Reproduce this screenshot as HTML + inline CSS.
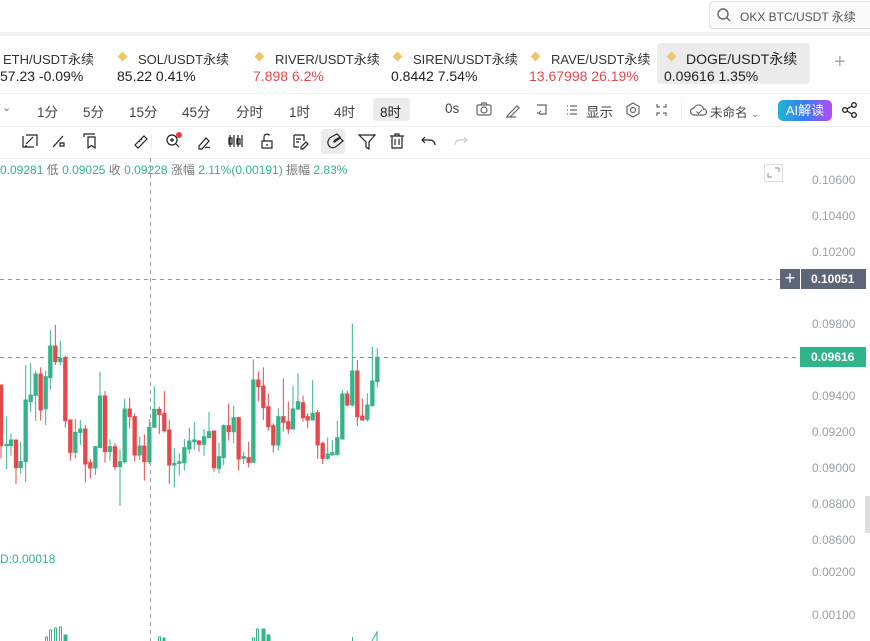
<!DOCTYPE html>
<html><head><meta charset="utf-8"><style>
*{margin:0;padding:0;box-sizing:border-box}
body{width:870px;height:641px;overflow:hidden;background:#fff;font-family:"Liberation Sans","Noto Sans CJK SC",sans-serif;position:relative;color:#333}
.a{position:absolute;white-space:nowrap}
.hl{position:absolute;left:0;width:870px;height:1px;background:#eef0f2}
.tk{font-size:13px;color:#333}
.pr{font-size:14px;color:#222}
.red{color:#e5484d}
.dia{position:absolute;width:7px;height:7px;background:#f3c56a;transform:rotate(45deg)}
.tf{font-size:13.5px;color:#444;top:101px}
.ax{position:absolute;white-space:nowrap;font-size:12px;color:#9aa0a8;left:812px}
svg{position:absolute}
</style></head><body>
<div class="a" style="left:0;top:0;width:870px;height:33px;background:#fff"></div>
<div class="a" style="left:0;top:32px;width:870px;height:4px;background:#f3f4f6"></div>
<div class="a" style="left:709px;top:1px;width:165px;height:28px;border:1px solid #dfe1e5;border-radius:4px;background:#fafafa"></div>
<svg style="left:716px;top:7px" width="16" height="16" viewBox="0 0 16 16"><circle cx="7" cy="7" r="5" fill="none" stroke="#666" stroke-width="1.4"/><path d="M10.5 10.5L14 14" stroke="#666" stroke-width="1.4"/></svg>
<div class="a" style="left:740px;top:8px;font-size:12px;color:#555">OKX BTC/USDT 永续</div>

<div class="a" style="left:657px;top:43px;width:153px;height:41px;background:#ebebeb;border-radius:4px"></div>
<div class="a tk" style="left:3px;top:49px">ETH/USDT永续</div><div class="a pr" style="left:0;top:68px">57.23 -0.09%</div>
<div class="dia" style="left:119px;top:53px"></div><div class="a tk" style="left:138px;top:49px">SOL/USDT永续</div><div class="a pr" style="left:117px;top:68px">85.22 0.41%</div>
<div class="dia" style="left:256px;top:53px"></div><div class="a tk" style="left:275px;top:49px">RIVER/USDT永续</div><div class="a pr red" style="left:253px;top:68px">7.898 6.2%</div>
<div class="dia" style="left:394px;top:53px"></div><div class="a tk" style="left:413px;top:49px">SIREN/USDT永续</div><div class="a pr" style="left:391px;top:68px">0.8442 7.54%</div>
<div class="dia" style="left:532px;top:53px"></div><div class="a tk" style="left:551px;top:49px">RAVE/USDT永续</div><div class="a pr red" style="left:529px;top:68px">13.67998 26.19%</div>
<div class="dia" style="left:668px;top:53px"></div><div class="a tk" style="left:686px;top:49px;font-size:14px;color:#222">DOGE/USDT永续</div><div class="a pr" style="left:664px;top:68px">0.09616 1.35%</div>
<div class="a" style="left:834px;top:51px;font-size:20px;color:#aaa;font-weight:300">+</div>

<div class="hl" style="top:93px"></div>
<div class="a" style="left:2px;top:101px;font-size:11px;color:#777">⌄</div>
<div class="a" style="left:373px;top:98px;width:37px;height:23px;background:#ebebeb;border-radius:3px"></div>
<div class="a tf" style="left:37px">1分</div><div class="a tf" style="left:83px">5分</div><div class="a tf" style="left:129px">15分</div><div class="a tf" style="left:182px">45分</div><div class="a tf" style="left:236px">分时</div><div class="a tf" style="left:289px">1时</div><div class="a tf" style="left:334px">4时</div><div class="a tf" style="left:380px;color:#222">8时</div>
<div class="a tf" style="left:445px">0s</div>
<svg style="left:475px;top:101px" width="150" height="18" viewBox="0 0 150 18" fill="none" stroke="#666" stroke-width="1.2"><rect x="2" y="4" width="14" height="10" rx="1.5"/><circle cx="9" cy="9" r="3"/><path d="M6 4l1-2h4l1 2"/><path d="M33 14l9-9 2 2-9 9h-3z M31 16h10"/><path d="M62 4h9v9h-5 M66 10l-2 2 2 2 M64 12h-2"/><path d="M95 5h7 M95 9h7 M95 13h7 M92 5h1 M92 9h1 M92 13h1"/></svg>
<div class="a tf" style="left:586px;top:101px">显示</div>
<svg style="left:624px;top:101px" width="50" height="18" viewBox="0 0 50 18" fill="none" stroke="#666" stroke-width="1.2"><path d="M9 2l6 3.5v7L9 16l-6-3.5v-7z"/><circle cx="9" cy="9" r="2.5"/><path d="M33 3v3h3 M42 3v3h-3 M33 15v-3h3 M42 15v-3h-3"/></svg>
<div class="a" style="left:681px;top:98px;width:1px;height:24px;background:#eee"></div>
<svg style="left:690px;top:102px" width="18" height="16" viewBox="0 0 18 16" fill="none" stroke="#666" stroke-width="1.2"><path d="M4 13a3.5 3.5 0 0 1 0-7 5 5 0 0 1 9.5 1 3 3 0 0 1 0 6z"/><path d="M6.5 9.5l2 2 3.5-3.5"/></svg>
<div class="a tf" style="left:710px;font-size:12.5px;top:102px">未命名 <span style="font-size:10px;color:#777">⌄</span></div>
<div class="a" style="left:778px;top:100px;width:54px;height:21px;border-radius:5px;background:linear-gradient(90deg,#1fb6d6,#3a7cf0 50%,#b64cf3);color:#fff;font-size:13px;text-align:center;line-height:21px">AI解读</div>
<svg style="left:841px;top:101px" width="18" height="18" viewBox="0 0 18 18" fill="none" stroke="#222" stroke-width="1.3"><circle cx="4" cy="9" r="2.3"/><circle cx="13" cy="4" r="2.3"/><circle cx="13" cy="14" r="2.3"/><path d="M6 8l5-3 M6 10l5 3"/></svg>

<div class="hl" style="top:126px"></div>
<div class="a" style="left:321px;top:129px;width:24px;height:25px;background:#ebebeb;border-radius:3px"></div>
<svg style="left:0;top:131px" width="480" height="20" viewBox="0 0 480 20" fill="none" stroke="#222" stroke-width="1.2">
<path d="M23 5v11h11 M37 15V4H26 M26 13l7-7 M25 15h2"/>
<path d="M53 16l10-11 M56 13l-2 2 M60 15h4v-3h-4z" />
<path d="M104 6v-3h11 M108 6h7v11l-3.5-2.5-3.5 2.5z" transform="translate(-20 0)"/>
<path d="M135 14l9-9 3 3-9 9z M139 10l1 1 M141 8l1 1"/>
<circle cx="172" cy="9" r="5"/><path d="M176 13l3 3 M170 9h4 M172 7v4"/>
<path d="M199 15l7-8 3 3-7 8h-3z M205 17c2-1 3-1 5 0"/>
<path d="M230 4v12 M234 4v12 M238 4v12 M242 4v12 M229 7h3v6h-3z M237 8h3v5h-3z"/>
<path d="M262 10h10v7h-10z M264 10V6a3 3 0 0 1 5.5-1.5 M267 13v2"/>
<path d="M294 4h10v6 M294 4v12h5 M296 8h5 M296 11h3 M301 16l5-5 2 2-5 5h-2z"/>
<path d="M330 16c-4-4-2-9 3-11l4-2 3 3-5 3c-2 2-1 3 1 1l4-3 3 3-5 4c-3 3-6 3-8 2z"/>
<path d="M359 4h16l-6 7v7l-3-2v-5z"/>
<path d="M390 5h14 M395 5V3h4v2 M392 5v12h10V5 M395 8v6 M399 8v6"/>
<path d="M425 6l-3 3 3 3 M422 9h8a5 5 0 0 1 5 5"/>
<path d="M464 6l3 3-3 3 M467 9h-7a5 5 0 0 0-5 5" stroke="#ccc"/>
</svg>
<div class="a" style="left:176px;top:132px;width:6px;height:6px;border-radius:50%;background:#f03a3a"></div>
<div class="a" style="left:151px;top:134px;width:1px;height:16px;background:#eee"></div>

<div class="hl" style="top:158px"></div>
<div class="a" style="left:0;top:161px;font-size:12px;color:#2fb58a"><span>0.09281</span> <span style="color:#777">低</span> 0.09025 <span style="color:#777">收</span> 0.09228 <span style="color:#777">涨幅</span> 2.11%(0.00191) <span style="color:#777">振幅</span> 2.83%</div>
<svg style="left:764px;top:164px" width="19" height="18" viewBox="0 0 19 18" fill="none"><rect x="0.5" y="0.5" width="18" height="17" stroke="#ddd"/><path d="M4 9v4h4 M11 4h4v4" stroke="#888"/></svg>

<svg style="left:0;top:158px" width="870" height="483">
<line x1="150.5" y1="0" x2="150.5" y2="483" stroke="#999" stroke-dasharray="4 4"/>
<line x1="0" y1="121.5" x2="780" y2="121.5" stroke="#999" stroke-dasharray="4 4"/>
<line x1="0" y1="199.5" x2="800" y2="199.5" stroke="#2fb58a" stroke-dasharray="4 4"/>
</svg>
<div class="ax" style="top:173px">0.10600</div><div class="ax" style="top:209px">0.10400</div><div class="ax" style="top:245px">0.10200</div>
<div class="ax" style="top:317px">0.09800</div><div class="ax" style="top:389px">0.09400</div><div class="ax" style="top:425px">0.09200</div><div class="ax" style="top:461px">0.09000</div><div class="ax" style="top:497px">0.08800</div><div class="ax" style="top:533px">0.08600</div><div class="ax" style="top:565px">0.00200</div><div class="ax" style="top:608px">0.00100</div>
<div class="a" style="left:780px;top:269px;width:20px;height:20px;background:#5d6677;color:#fff;font-size:18px;line-height:19px;text-align:center">+</div>
<div class="a" style="left:801px;top:269px;width:65px;height:20px;background:#5d6677;color:#fff;font-size:12px;font-weight:bold;line-height:20px;padding-left:10px">0.10051</div>
<div class="a" style="left:800px;top:347px;width:66px;height:20px;background:#2fb58a;color:#fff;font-size:12px;font-weight:bold;line-height:20px;padding-left:11px">0.09616</div>
<div class="a" style="left:865px;top:496px;width:5px;height:37px;background:#ddd"></div>
<div class="a" style="left:0;top:552px;font-size:12px;color:#2fb58a">D:0.00018</div>

<svg style="left:0;top:310px" width="400" height="200" viewBox="0 0 1200 600">
<g stroke="#e5484d" stroke-width="3" fill="#e5484d">
<path d="M3 225V445M48 390V522M122 172V332M166 45V165M196 137V353M211 330V452M256 345V517M271 447V505M315 243V457M345 400V480M389 263V355M404 310V455M433 373V512M478 290V372M493 243V368M508 330V522M597 390V425M642 363V485M686 280V392M716 320V482M746 395V472M775 185V275M790 172V330M805 250V362M820 340V427M850 205V365M865 275V372M909 257V335M923 310V355M953 300V447M968 395V462M1042 242V290M1072 150V348M1087 265V332"/>
<rect x="-2" y="225" width="10" height="182"/><rect x="43" y="390" width="10" height="83"/><rect x="117" y="192" width="10" height="108"/><rect x="161" y="108" width="10" height="47"/><rect x="191" y="143" width="10" height="189"/><rect x="206" y="330" width="10" height="97"/><rect x="251" y="357" width="10" height="105"/><rect x="266" y="458" width="10" height="16"/><rect x="310" y="258" width="10" height="167"/><rect x="340" y="410" width="10" height="60"/><rect x="384" y="297" width="10" height="23"/><rect x="399" y="320" width="10" height="115"/><rect x="428" y="408" width="10" height="47"/><rect x="473" y="298" width="10" height="15"/><rect x="488" y="310" width="10" height="52"/><rect x="503" y="360" width="10" height="105"/><rect x="592" y="393" width="10" height="10"/><rect x="637" y="363" width="10" height="110"/><rect x="681" y="347" width="10" height="18"/><rect x="711" y="323" width="10" height="124"/><rect x="741" y="443" width="10" height="14"/><rect x="770" y="210" width="10" height="20"/><rect x="785" y="228" width="10" height="65"/><rect x="800" y="290" width="10" height="60"/><rect x="815" y="347" width="10" height="58"/><rect x="845" y="320" width="10" height="17"/><rect x="860" y="335" width="10" height="22"/><rect x="904" y="278" width="10" height="45"/><rect x="918" y="320" width="10" height="10"/><rect x="948" y="308" width="10" height="97"/><rect x="963" y="400" width="10" height="45"/><rect x="1037" y="252" width="10" height="33"/><rect x="1067" y="183" width="10" height="137"/><rect x="1082" y="318" width="10" height="12"/>
</g>
<g stroke="#36b38a" stroke-width="3" fill="#36b38a">
<path d="M20 320V478M33 370V437M62 395V490M77 165V517M92 160V305M107 183V332M137 182V345M151 60V240M181 93V165M226 327V445M241 330V405M286 408V495M300 185V413M330 388V452M360 418V588M374 267V460M419 380V450M448 327V462M463 230V352M523 415V532M538 430V497M553 387V482M568 353V432M583 337V420M612 357V437M627 306V383M657 398V490M671 343V465M701 287V400M731 425V462M760 148V457M835 295V422M879 228V357M894 190V300M938 210V330M983 383V450M997 390V437M1012 332V437M1027 240V387M1057 40V290M1102 250V335M1117 110V290M1132 115V232"/>
<rect x="15" y="403" width="10" height="4"/><rect x="28" y="390" width="10" height="17"/><rect x="57" y="455" width="10" height="18"/><rect x="72" y="270" width="10" height="185"/><rect x="87" y="255" width="10" height="20"/><rect x="102" y="192" width="10" height="64"/><rect x="132" y="200" width="10" height="96"/><rect x="146" y="108" width="10" height="95"/><rect x="176" y="145" width="10" height="10"/><rect x="221" y="367" width="10" height="60"/><rect x="236" y="357" width="10" height="10"/><rect x="281" y="410" width="10" height="64"/><rect x="295" y="258" width="10" height="155"/><rect x="325" y="410" width="10" height="15"/><rect x="355" y="455" width="10" height="15"/><rect x="369" y="297" width="10" height="158"/><rect x="414" y="408" width="10" height="27"/><rect x="443" y="352" width="10" height="103"/><rect x="458" y="298" width="10" height="54"/><rect x="518" y="460" width="10" height="5"/><rect x="533" y="455" width="10" height="5"/><rect x="548" y="413" width="10" height="45"/><rect x="563" y="393" width="10" height="24"/><rect x="578" y="390" width="10" height="5"/><rect x="607" y="380" width="10" height="23"/><rect x="622" y="365" width="10" height="18"/><rect x="652" y="440" width="10" height="35"/><rect x="666" y="347" width="10" height="96"/><rect x="696" y="323" width="10" height="42"/><rect x="726" y="440" width="10" height="5"/><rect x="755" y="210" width="10" height="247"/><rect x="830" y="320" width="10" height="85"/><rect x="874" y="297" width="10" height="60"/><rect x="889" y="275" width="10" height="22"/><rect x="933" y="310" width="10" height="20"/><rect x="978" y="432" width="10" height="13"/><rect x="992" y="428" width="10" height="7"/><rect x="1007" y="383" width="10" height="50"/><rect x="1022" y="252" width="10" height="135"/><rect x="1052" y="183" width="10" height="102"/><rect x="1097" y="285" width="10" height="43"/><rect x="1112" y="213" width="10" height="74"/><rect x="1127" y="142" width="10" height="73"/>
</g>
</svg>
<svg style="left:0;top:610px" width="400" height="31" fill="none" stroke="#36b38a" stroke-width="1">
<path d="M45.5 31v-4h2v4 M49.5 31v-11h2v11 M54.5 31v-13h2v13 M59.5 31v-14h2v14"/><rect x="64" y="25" width="3" height="6" fill="#36b38a"/>
<path d="M158.5 31v-4h2v4"/><rect x="163" y="28" width="2" height="3" fill="#36b38a"/>
<path d="M252.5 31v-3h2v3 M256.5 31v-12h2v12"/><rect x="262" y="19" width="3" height="12" fill="#36b38a"/><rect x="267" y="25" width="3" height="6" fill="#36b38a"/>
<path d="M352.5 31v-4 M372 31l5-9v9"/>
</svg>
</body></html>
